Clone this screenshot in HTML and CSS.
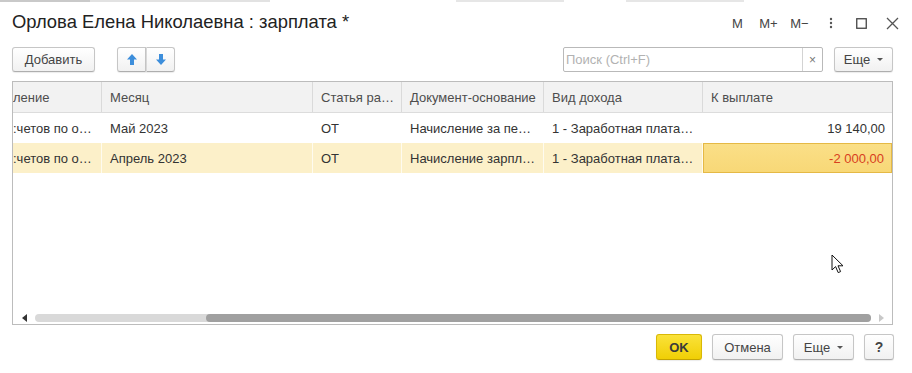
FILE: index.html
```html
<!DOCTYPE html>
<html lang="ru">
<head>
<meta charset="utf-8">
<title>Орлова Елена Николаевна : зарплата *</title>
<link rel="stylesheet" href="styles.css">
</head>
<body>
<div class="window">
  <div class="topline"></div>
  <header class="titlebar">
    <h1 class="title">Орлова Елена Николаевна : зарплата *</h1>
    <div class="wincontrols">
      <span class="wc">M</span>
      <span class="wc">M+</span>
      <span class="wc">M&minus;</span>
      <span class="wc"><svg width="4" height="12" viewBox="0 0 4 12"><circle cx="2" cy="2" r="1.2" fill="#555"/><circle cx="2" cy="6" r="1.2" fill="#555"/><circle cx="2" cy="10" r="1.2" fill="#555"/></svg></span>
      <span class="wc"><svg width="11" height="11" viewBox="0 0 11 11"><rect x="0.75" y="0.75" width="9.5" height="9.5" fill="none" stroke="#444" stroke-width="1.3"/></svg></span>
      <span class="wc"><svg width="13" height="13" viewBox="0 0 13 13"><path d="M1 1 L12 12 M12 1 L1 12" stroke="#555" stroke-width="1.3" fill="none"/></svg></span>
    </div>
  </header>

  <div class="toolbar">
    <button class="btn btn-add">Добавить</button>
    <div class="btn-group">
      <button class="btn btn-icon btn-left"><svg width="10" height="11" viewBox="0 0 10 11"><path d="M5 0 L10 5.5 L7 5.5 L7 11 L3 11 L3 5.5 L0 5.5 Z" fill="#3d8edb"/></svg></button>
      <button class="btn btn-icon btn-right"><svg width="10" height="11" viewBox="0 0 10 11"><path d="M3 0 L7 0 L7 5.5 L10 5.5 L5 11 L0 5.5 L3 5.5 Z" fill="#3d8edb"/></svg></button>
    </div>
    <div class="search">
      <span class="search-field">Поиск (Ctrl+F)</span>
      <span class="search-clear">&times;</span>
    </div>
    <button class="btn btn-more">Еще <span class="caret"></span></button>
  </div>

  <div class="table">
    <div class="row head">
      <div class="cell c1">ление</div>
      <div class="cell">Месяц</div>
      <div class="cell">Статья ра…</div>
      <div class="cell">Документ-основание</div>
      <div class="cell">Вид дохода</div>
      <div class="cell">К выплате</div>
    </div>
    <div class="row">
      <div class="cell c1">:четов по о…</div>
      <div class="cell">Май 2023</div>
      <div class="cell">ОТ</div>
      <div class="cell">Начисление за пе…</div>
      <div class="cell">1 - Заработная плата…</div>
      <div class="cell num">19 140,00</div>
    </div>
    <div class="row selected">
      <div class="cell c1">:четов по о…</div>
      <div class="cell">Апрель 2023</div>
      <div class="cell">ОТ</div>
      <div class="cell">Начисление зарпл…</div>
      <div class="cell">1 - Заработная плата…</div>
      <div class="cell num current neg">-2 000,00</div>
    </div>
    <div class="table-fill"></div>
    <div class="hscroll">
      <span class="sarrow"><svg width="5" height="8" viewBox="0 0 5 8"><path d="M5 0 L0 4 L5 8 Z" fill="#333"/></svg></span>
      <div class="track"><div class="thumb"></div></div>
      <span class="sarrow"><svg width="5" height="8" viewBox="0 0 5 8"><path d="M0 0 L5 4 L0 8 Z" fill="#c8c8c8"/></svg></span>
    </div>
  </div>

  <div class="footer">
    <button class="btn btn-ok">OK</button>
    <button class="btn btn-cancel">Отмена</button>
    <button class="btn btn-more2">Еще <span class="caret"></span></button>
    <button class="btn btn-help">?</button>
  </div>

  <svg class="cursor" width="14" height="21" viewBox="0 0 14 21"><path d="M1 1 L1 16 L4.6 12.6 L7.2 18.6 L9.6 17.6 L7 11.8 L12 11.8 Z" fill="#fff" stroke="#111" stroke-width="1" stroke-linejoin="round"/></svg>
</div>
</body>
</html>
```

FILE: styles.css
```css
* { box-sizing: border-box; }

html, body {
  margin: 0;
  padding: 0;
  background: #fff;
}

body {
  font-family: "Liberation Sans", Arial, sans-serif;
  font-size: 13px;
  color: #333;
}

.window {
  position: relative;
  width: 912px;
  height: 373px;
  overflow: hidden;
  display: flex;
  flex-direction: column;
  background: #fff;
}

.topline {
  height: 2px;
  background: linear-gradient(to right, #c9c9c9 0, #c9c9c9 90px, #e2e2e2 90px, #e2e2e2 270px, #fff 270px, #fff 456px, #e6e6e6 456px, #e6e6e6 564px, #fff 564px, #fff 626px, #e6e6e6 626px, #e6e6e6 744px, #fff 744px);
}

.titlebar {
  height: 40px;
  display: flex;
  align-items: center;
  justify-content: space-between;
  padding: 0 4px 0 12px;
}

.title {
  margin: 0;
  font-size: 18.4px;
  font-weight: normal;
  line-height: 22px;
  color: #222;
}

.wincontrols {
  display: flex;
  align-items: center;
  padding-top: 2px;
}

.wc {
  width: 31px;
  height: 20px;
  display: flex;
  align-items: center;
  justify-content: center;
  font-size: 13px;
  color: #444;
}

.toolbar {
  margin-top: 5px;
  height: 25px;
  display: flex;
  align-items: stretch;
  padding: 0 19px 0 12px;
}

.btn {
  height: 25px;
  padding: 0;
  margin: 0;
  border: 1px solid #c6c6c6;
  border-bottom-color: #aeaeae;
  border-radius: 3px;
  background: linear-gradient(#ffffff, #f1f1f1);
  box-shadow: 0 1px 1px rgba(0, 0, 0, 0.08);
  font-family: "Liberation Sans", Arial, sans-serif;
  font-size: 13px;
  color: #444;
  display: flex;
  align-items: center;
  justify-content: center;
}

.btn-add { width: 83px; }

.btn-group {
  margin-left: 22px;
  display: flex;
}

.btn-icon { width: 29px; }
.btn-left { border-radius: 3px 0 0 3px; }
.btn-right { border-radius: 0 3px 3px 0; border-left: 1px solid #d8d8d8; }

.search {
  margin-left: auto;
  width: 260px;
  display: flex;
  border: 1px solid #b9b9b9;
  border-radius: 2px;
  background: #fff;
}

.search-field {
  flex: 1;
  display: flex;
  align-items: center;
  padding-left: 2px;
  color: #b2b2b2;
  font-size: 13px;
}

.search-clear {
  width: 20px;
  border-left: 1px solid #d3d3d3;
  display: flex;
  align-items: center;
  justify-content: center;
  color: #777;
  font-size: 12px;
}

.btn-more {
  margin-left: 11px;
  width: 59px;
}

.caret {
  display: inline-block;
  margin-left: 7px;
  width: 0;
  height: 0;
  border-left: 3px solid transparent;
  border-right: 3px solid transparent;
  border-top: 3px solid #555;
}

.table {
  margin: 9px 19px 0 12px;
  height: 244px;
  border: 1px solid #bcbcbc;
  display: flex;
  flex-direction: column;
}

.row {
  display: grid;
  grid-template-columns: 89px 211px 89px 142px 159px 189px;
  height: 30px;
}

.row.head {
  height: 31px;
  background: #f2f2f2;
  border-bottom: 1px solid #dcdcdc;
  color: #4d4d4d;
}

.cell {
  display: flex;
  align-items: center;
  padding: 0 7px 0 8px;
  white-space: nowrap;
  overflow: hidden;
  border-right: 1px solid rgba(255, 255, 255, 0.7);
}

.head .cell { border-right: 1px solid #dadada; }
.head .cell:last-child { border-right: none; }
.cell:last-child { border-right: none; }

.cell.c1 { padding-left: 0; }

.num { justify-content: flex-end; }

.row.selected { background: #fcf0c9; }

.cell.current {
  background: linear-gradient(#fadf87, #f8d877);
  border: 1px solid #e5b945;
}

.neg { color: #d8401e; }

.table-fill { flex: 1; }

.hscroll {
  height: 12px;
  display: flex;
  align-items: center;
}

.sarrow {
  width: 22px;
  display: flex;
  align-items: center;
  justify-content: center;
}

.sarrow:last-child { width: 21px; }

.track {
  flex: 1;
  height: 8px;
  border-radius: 4px;
  background: #d9d9d9;
  display: flex;
}

.thumb {
  flex: 1;
  margin-left: 171px;
  border-radius: 4px;
  background: #a0a0a0;
}

.footer {
  margin-top: 9px;
  display: flex;
  justify-content: flex-end;
  gap: 10px;
  padding-right: 18px;
}

.footer .btn { height: 26px; }

.btn-ok {
  width: 46px;
  background: linear-gradient(#fae23a, #f0cf05);
  border-color: #d9b806;
  border-bottom-color: #c4a300;
  font-weight: bold;
  color: #3a3a3a;
}

.btn-cancel { width: 71px; }
.btn-more2 { width: 61px; }
.btn-help { width: 30px; font-weight: bold; color: #444; font-size: 14px; }

.cursor {
  position: absolute;
  left: 831px;
  top: 254px;
}
```
